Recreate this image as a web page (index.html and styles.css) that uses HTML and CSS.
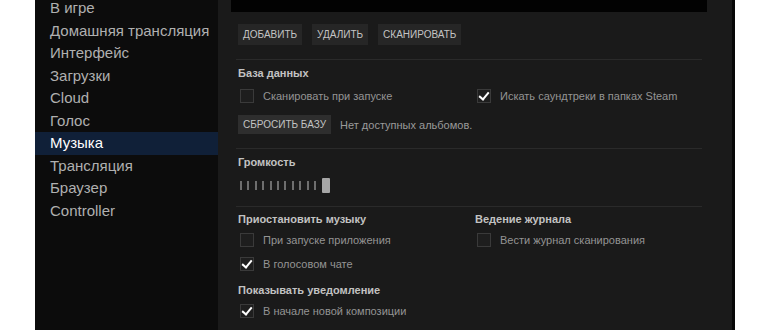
FILE: index.html
```html
<!DOCTYPE html>
<html lang="ru">
<head>
    <meta charset="UTF-8">
    <title>Настройки — Музыка</title>
    <link rel="stylesheet" href="styles.css">
</head>
<body>
<div class="window">
    <ul class="sidebar">
        <li>В игре</li>
        <li>Домашняя трансляция</li>
        <li>Интерфейс</li>
        <li>Загрузки</li>
        <li>Cloud</li>
        <li>Голос</li>
        <li class="active">Музыка</li>
        <li>Трансляция</li>
        <li>Браузер</li>
        <li>Controller</li>
    </ul>

    <div class="main">
        <div class="folder-list"></div>

        <div class="toolbar">
            <button class="btn">Добавить</button>
            <button class="btn">Удалить</button>
            <button class="btn">Сканировать</button>
        </div>

        <div class="sep"></div>

        <h3 class="heading">База данных</h3>
        <div class="cols">
            <label class="check"><span class="box"></span>Сканировать при запуске</label>
            <label class="check"><span class="box on"></span>Искать саундтреки в папках Steam</label>
        </div>
        <div class="reset-row">
            <button class="btn">Сбросить базу</button>
            <span class="note">Нет доступных альбомов.</span>
        </div>

        <div class="sep sep-2"></div>

        <h3 class="heading">Громкость</h3>
        <div class="slider">
            <span class="tick"></span><span class="tick"></span><span class="tick"></span>
            <span class="tick"></span><span class="tick"></span><span class="tick"></span>
            <span class="tick"></span><span class="tick"></span><span class="tick"></span>
            <span class="tick"></span><span class="tick"></span>
            <span class="handle"></span>
        </div>

        <div class="sep sep-3"></div>

        <div class="cols">
            <div class="col">
                <h3 class="heading">Приостановить музыку</h3>
                <label class="check"><span class="box"></span>При запуске приложения</label>
                <label class="check"><span class="box on"></span>В голосовом чате</label>
                <h3 class="heading heading-gap">Показывать уведомление</h3>
                <label class="check"><span class="box on"></span>В начале новой композиции</label>
            </div>
            <div class="col">
                <h3 class="heading">Ведение журнала</h3>
                <label class="check"><span class="box"></span>Вести журнал сканирования</label>
            </div>
        </div>
    </div>
</div>
</body>
</html>
```

FILE: styles.css
```css
body {
    margin: 0;
    background: #fff;
    font-family: "Liberation Sans", Arial, sans-serif;
}

.window {
    display: flex;
    margin-left: 35px;
    width: 697px;
    height: 330px;
    overflow: hidden;
    background: #1a1a1a;
    border-right: 3px solid #070707;
}

/* левое меню */
.sidebar {
    list-style: none;
    margin: -3px 0 0;
    padding: 0;
    width: 183px;
    flex-shrink: 0;
    background: #0c0c0c;
}

.sidebar li {
    height: 22.5px;
    line-height: 22.5px;
    padding-left: 15px;
    font-size: 15px;
    color: #b0b0b0;
}

.sidebar li.active {
    background: #102038;
    color: #fff;
}

/* правая часть */
.main {
    flex: 1;
    padding-left: 20px;
    color: #949494;
    font-size: 11px;
}

.folder-list {
    height: 12px;
    width: 476px;
    margin-left: -7px;
    background: #020202;
}

.toolbar {
    display: flex;
    gap: 10px;
    margin-top: 12px;
}

.btn {
    height: 21px;
    padding: 0 5px;
    border: none;
    background: #262626;
    color: #c4c4c4;
    font-family: inherit;
    font-size: 10px;
    text-transform: uppercase;
    cursor: pointer;
}

.sep {
    height: 1px;
    width: 466px;
    margin-left: -2px;
    margin-top: 14px;
    background: #2a2a2a;
}

.heading {
    margin: 6px 0 0;
    line-height: 14px;
    font-size: 11px;
    font-weight: bold;
    color: #c2c2c2;
}

.cols {
    display: flex;
}

.cols > .check:first-child,
.col:first-child {
    width: 237px;
}

.check {
    display: flex;
    align-items: center;
    height: 20px;
    margin-top: 6px;
    gap: 9px;
}

.col .check {
    margin-top: 4px;
}

.col .heading {
    margin-top: 5px;
}

.col .heading-gap {
    margin-top: 9px;
}

.box {
    width: 12px;
    height: 12px;
    margin-left: 2px;
    border: 1px solid #3a3a3a;
    background: #1e1e1e;
    position: relative;
}

.box.on::after {
    content: "";
    position: absolute;
    left: 3px;
    top: 0;
    width: 4px;
    height: 8px;
    border: solid #fff;
    border-width: 0 2px 2px 0;
    transform: rotate(40deg);
}

.reset-row {
    display: flex;
    align-items: center;
    gap: 9px;
    margin-top: 9px;
}

.reset-row .btn {
    height: 19px;
    background: #2e2e2e;
}

.note {
    color: #9a9a9a;
}

.sep-2 {
    margin-top: 14px;
}

.heading + .slider {
    margin-top: 8px;
}

.slider {
    display: flex;
    align-items: center;
    height: 16px;
    padding-left: 2px;
}

.tick {
    width: 2px;
    height: 9px;
    margin-right: 5.4px;
    background: #6e6e6e;
}

.handle {
    width: 8px;
    height: 15px;
    margin-left: 1px;
    background: #a6a6a6;
    border-radius: 1px;
}

.sep-3 {
    margin-top: 13px;
}
```
